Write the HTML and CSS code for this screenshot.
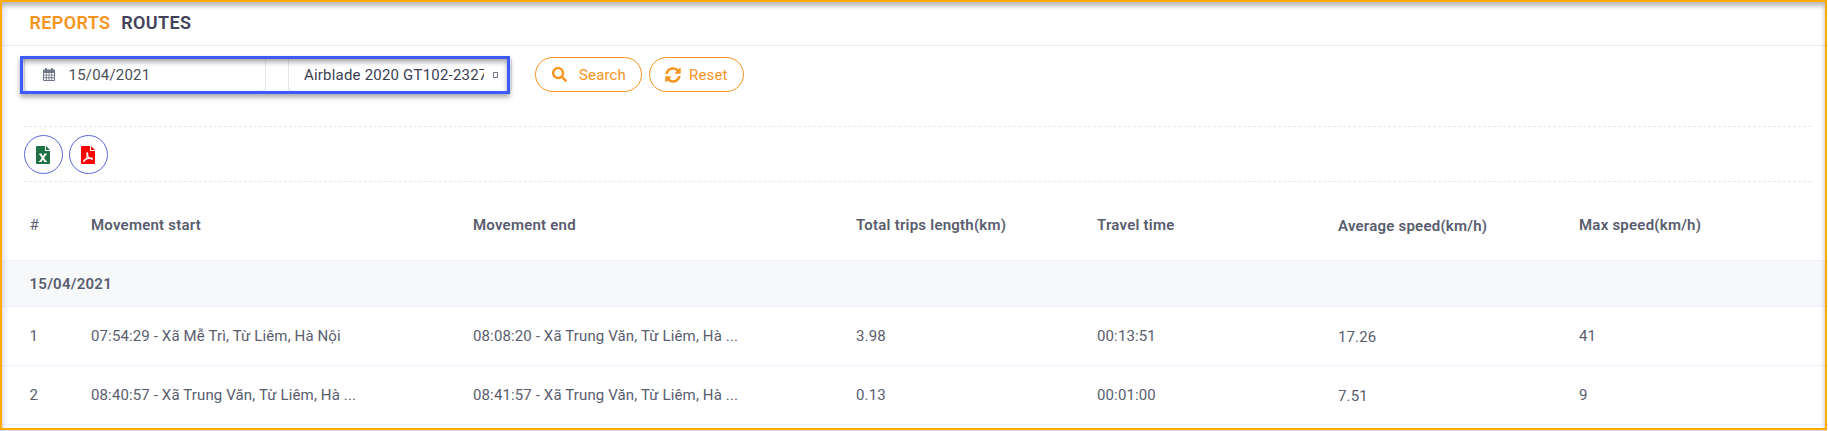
FILE: index.html
```html
<!DOCTYPE html>
<html lang="en">
<head>
<meta charset="utf-8">
<title>Reports - Routes</title>
<link rel="stylesheet" href="styles.css">
</head>
<body>
<main class="page">
  <header class="header"><span class="header-section">REPORTS</span><span class="header-title">ROUTES</span></header>
  <section class="filters">
    <div class="fields">
      <div class="date-field">
        <svg class="calendar" viewBox="0 0 12 13"><path fill="#6f7488" fill-rule="evenodd" d="M2 1.5V.6Q2 0 2.7 0h.6Q4 0 4 .6v.9h4V.6Q8 0 8.700 0h.6Q10 0 10 .6v.9h1q1 0 1 1V12q0 1-1 1H1q-1 0-1-1V2.500q0-1 1-1zM1 5v1.700h1.900V5zm2.700 0v1.700h1.900V5zm2.700 0v1.700h1.900V5zm2.700 0v1.700H11V5zM1 7.500v1.800h1.900V7.500zm2.700 0v1.800h1.900V7.500zm2.700 0v1.800h1.900V7.500zm2.700 0v1.800H11V7.500zM1 10.200V12h1.900v-1.800zm2.700 0V12h1.900v-1.800zm2.700 0V12h1.900v-1.800zm2.700 0V12H11v-1.800z"/></svg>
        <span>15/04/2021</span>
      </div>
      <div class="select-field"><span class="select-value">Airblade 2020 GT102-2327</span><i class="select-mark"></i></div>
      <div class="highlight"></div>
    </div>
    <button class="btn btn-search"><svg width="15" height="15" viewBox="0 0 512 512"><path fill="currentColor" d="M505 442.700L405.300 343c-4.500-4.500-10.600-7-17-7H372c27.600-35.300 44-79.700 44-128C416 93.100 322.900 0 208 0S0 93.100 0 208s93.100 208 208 208c48.300 0 92.700-16.400 128-44v16.300c0 6.400 2.500 12.500 7 17l99.700 99.700c9.400 9.400 24.600 9.400 33.900 0l28.300-28.300c9.400-9.400 9.400-24.600.1-34zM208 336c-70.700 0-128-57.200-128-128 0-70.700 57.200-128 128-128 70.700 0 128 57.200 128 128 0 70.700-57.200 128-128 128z"/></svg><span>Search</span></button>
    <button class="btn btn-reset"><svg width="16" height="16" viewBox="0 0 512 512"><path fill="currentColor" d="M370.720 133.280C339.458 104.008 298.888 87.962 255.848 88c-77.458.068-144.328 53.178-162.791 126.850-1.344 5.363-6.122 9.150-11.651 9.150H24.103c-7.498 0-13.194-6.807-11.807-14.176C33.933 94.924 134.813 8 256 8c66.448 0 126.791 26.136 171.315 68.685L463.030 40.970C478.149 25.851 504 36.559 504 57.941V192c0 13.255-10.745 24-24 24H345.941c-21.382 0-32.090-25.851-16.971-40.971l41.750-41.749zM32 296h134.059c21.382 0 32.090 25.851 16.971 40.971l-41.750 41.750c31.262 29.273 71.835 45.319 114.876 45.280 77.418-.070 144.315-53.144 162.787-126.849 1.344-5.363 6.122-9.150 11.651-9.150h57.304c7.498 0 13.194 6.807 11.807 14.176C478.067 417.076 377.187 504 256 504c-66.448 0-126.791-26.136-171.315-68.685L48.970 471.030C33.851 486.149 8 475.441 8 454.059V320c0-13.255 10.745-24 24-24z"/></svg><span>Reset</span></button>
  </section>
  <section class="exports">
    <button class="export excel"><svg width="14" height="18" viewBox="0 0 14 18"><path fill="#1f7145" d="M1 0h8v5h5v12q0 1-1 1H1q-1 0-1-1V1q0-1 1-1zm9 0l4 4h-4z"/><path stroke="#fff" stroke-width="2" d="M4.300 8l5 7.500M9.500 8l-5 7.500"/><path stroke="#fff" d="M3 8.200h2.800M8.200 8.200H11M3 15.500h2.800M8.200 15.500H11"/></svg></button>
    <button class="export pdf"><svg width="14" height="18" viewBox="0 0 14 18"><path fill="#f00" d="M1 0h8v5h5v12q0 1-1 1H1q-1 0-1-1V1q0-1 1-1zm9 0l4 4h-4z"/><path fill="none" stroke="#fff" stroke-width="1.300" d="M2.800 15.300C4.500 14.500 8 9 6.200 6.800c-1.300.5.500 5.300 4.800 6.500 1.500-.9-1.500-2-5.300-.4-1.700.6-3 1.500-2.900 2.400z"/></svg></button>
  </section>
  <section class="table">
    <div class="row head"><span class="num">#</span><span>Movement start</span><span>Movement end</span><span>Total trips length(km)</span><span>Travel time</span><span class="avg">Average speed(km/h)</span><span>Max speed(km/h)</span></div>
    <div class="row group"><span class="group-date">15/04/2021</span></div>
    <div class="row"><span>1</span><span>07:54:29 - Xã Mễ Trì, Từ Liêm, Hà Nội</span><span>08:08:20 - Xã Trung Văn, Từ Liêm, Hà ...</span><span>3.98</span><span>00:13:51</span><span class="avg">17.26</span><span>41</span></div>
    <div class="row"><span>2</span><span>08:40:57 - Xã Trung Văn, Từ Liêm, Hà ...</span><span>08:41:57 - Xã Trung Văn, Từ Liêm, Hà ...</span><span>0.13</span><span>00:01:00</span><span class="avg">7.51</span><span>9</span></div>
  </section>
  <div class="frame"></div>
</main>
</body>
</html>
```

FILE: styles.css
```css
* { box-sizing: border-box; }
body { margin: 0; background: #fff; overflow: hidden; font-family: Roboto, sans-serif; font-size: 15px; color: #595d6e; }
.page { position: relative; height: 431px; display: flex; flex-direction: column; }
.frame { position: absolute; left: 0; top: 0; width: 1827px; height: 430px; border: 2px solid #ffab00; box-shadow: inset 0 4px 5px rgba(0,0,0,.28), 0 1px 1px rgba(0,0,0,.15); pointer-events: none; }
.header { height: 46px; flex: none; display: flex; align-items: center; gap: 11px; padding: 0 29.5px; border-bottom: 1px solid #ebebeb; font-size: 18px; font-weight: 600; letter-spacing: .35px; color: #434158; }
.header-section { color: #f7941d; }
.filters { height: 80px; flex: none; display: flex; align-items: flex-start; padding: 11px 0 0 24px; }
.fields { position: relative; display: flex; width: 488px; height: 35px; margin-right: 23px; }
.highlight { position: absolute; left: -4px; top: -1px; width: 490px; height: 38px; border: 3px solid #3d5afe; box-shadow: 0 3px 5px rgba(0,0,0,.35), inset 0 3px 5px rgba(0,0,0,.35); }
.date-field, .select-field { display: flex; flex: none; align-items: center; height: 35px; border: 1px solid #e2e5ec; border-radius: 4px; letter-spacing: .2px; }
.date-field { width: 242px; margin-right: 22px; padding-left: 18px; gap: 13.5px; color: #495057; }
.calendar { width: 12px; height: 13px; }
.select-field { width: 224px; padding-left: 15px; color: #3b3e52; }
.select-value { width: 180px; overflow: hidden; white-space: nowrap; }
.select-mark { width: 5px; height: 6px; margin-left: 9px; border: 1px solid #777b8c; }
.btn { display: flex; align-items: center; height: 35px; padding: 0 0 0 16px; border: 1px solid #f7941d; border-radius: 18px; background: #fff; color: #f7941d; font: 15px Roboto, sans-serif; letter-spacing: .15px; }
.btn-search { width: 107px; gap: 12px; margin-right: 7px; }
.btn-reset { width: 95px; padding-left: 15px; gap: 8px; }
.exports { height: 56px; flex: none; display: flex; align-items: center; gap: 6px; margin: 0 17px 0 24px; padding-top: 1px; border-top: 1px dashed #e8e9ee; border-bottom: 1px dashed #e8e9ee; }
.export { display: flex; align-items: center; justify-content: center; width: 39px; height: 39px; padding: 0 1px 0 0; border: 1px solid #5867dd; border-radius: 50%; background: #fff; }
.row { display: grid; grid-template-columns: 61.5px 382px 383px 241px 241px 241px 1fr; align-items: center; height: 59px; padding-left: 29.5px; border-bottom: 1px solid #f0f3ff; white-space: nowrap; letter-spacing: .13px; }
.head { height: 79px; padding-top: 8px; font-weight: 600; letter-spacing: .23px; }
.head .num { font-weight: 400; }
.group { height: 46px; background: #f7f8fa; }
.group-date { font-weight: 600; letter-spacing: .25px; }
.avg { padding-top: 2px; }
```
